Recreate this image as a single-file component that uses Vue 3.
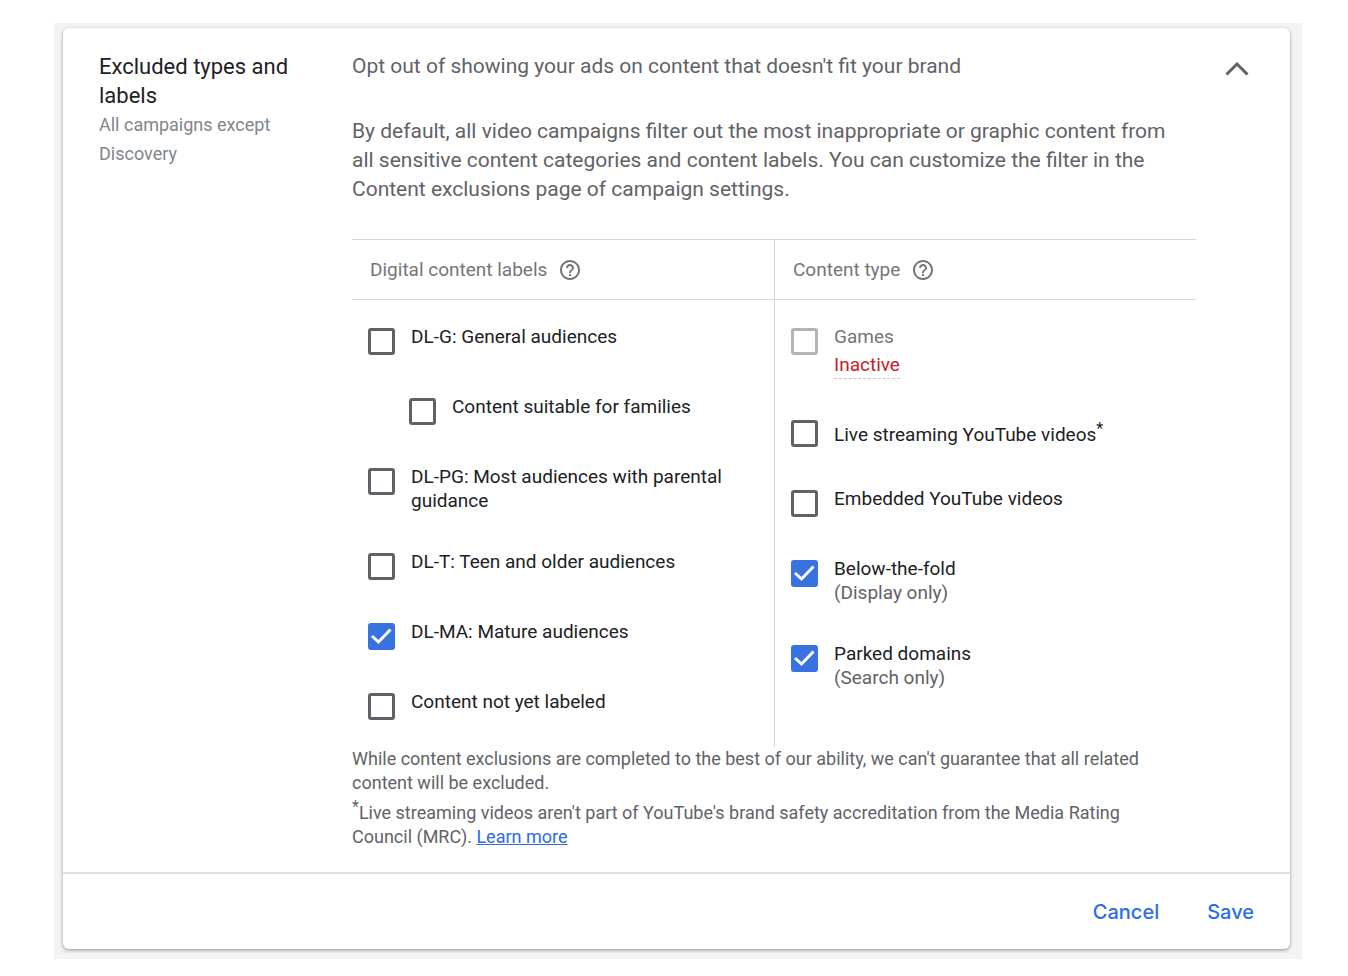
<script setup>
import { ref } from 'vue'

const expanded = ref(true)

const labels = ref([
  { id: 'dl-g', text: 'DL-G: General audiences', checked: false },
  { id: 'families', text: 'Content suitable for families', checked: false, nested: true },
  { id: 'dl-pg', text: 'DL-PG: Most audiences with parental guidance', checked: false },
  { id: 'dl-t', text: 'DL-T: Teen and older audiences', checked: false },
  { id: 'dl-ma', text: 'DL-MA: Mature audiences', checked: true },
  { id: 'unlabeled', text: 'Content not yet labeled', checked: false },
])

const types = ref([
  { id: 'games', text: 'Games', checked: false, disabled: true, status: 'Inactive' },
  { id: 'live', text: 'Live streaming YouTube videos', checked: false, starred: true },
  { id: 'embedded', text: 'Embedded YouTube videos', checked: false },
  { id: 'below', text: 'Below-the-fold', checked: true, hint: '(Display only)' },
  { id: 'parked', text: 'Parked domains', checked: true, hint: '(Search only)' },
])

const columns = [
  { id: 'labels', title: 'Digital content labels', items: labels },
  { id: 'types', title: 'Content type', items: types },
]
</script>

<template>
  <main class="page">
    <section class="card">
      <div class="body">
        <header class="side">
          <h2 class="title">Excluded types and labels</h2>
          <p class="subtitle">All campaigns except Discovery</p>
        </header>

        <div class="content">
          <p class="intro">Opt out of showing your ads on content that doesn't fit your brand</p>
          <p class="intro">
            By default, all video campaigns filter out the most inappropriate or graphic content from
            all sensitive content categories and content labels. You can customize the filter in the
            Content exclusions page of campaign settings.
          </p>

          <div class="columns">
            <section v-for="col in columns" :key="col.id" class="column">
              <div class="column-head">
                <h3 class="column-title">{{ col.title }}</h3>
                <button type="button" class="icon-button" :aria-label="'Help: ' + col.title">
                  <svg width="24" height="24" viewBox="0 0 24 24" fill="currentColor" aria-hidden="true">
                    <path d="M11 18h2v-2h-2v2zm1-16C6.48 2 2 6.48 2 12s4.48 10 10 10 10-4.48 10-10S17.520 2 12 2zm0 18c-4.410 0-8-3.590-8-8s3.590-8 8-8 8 3.590 8 8-3.590 8-8 8zm0-14c-2.210 0-4 1.790-4 4h2c0-1.100.9-2 2-2s2 .9 2 2c0 2-3 1.750-3 5h2c0-2.250 3-2.500 3-5 0-2.210-1.790-4-4-4z" />
                  </svg>
                </button>
              </div>
              <ul class="options">
                <li v-for="item in col.items.value" :key="item.id" class="option" :class="{ nested: item.nested, disabled: item.disabled }">
                  <span class="box">
                    <input :id="item.id" v-model="item.checked" type="checkbox" class="check" :disabled="item.disabled" />
                    <svg v-if="item.checked" class="tick" viewBox="0 0 27 27" fill="none" stroke="currentColor" stroke-width="3" aria-hidden="true">
                      <path d="M4 13 10.500 19 22.500 6.500" />
                    </svg>
                  </span>
                  <div class="option-text">
                    <label :for="item.id" class="option-label">{{ item.text }}<sup v-if="item.starred">*</sup><span v-if="item.hint" class="hint">{{ item.hint }}</span></label>
                    <div v-if="item.status" class="status-row"><span class="status">{{ item.status }}</span></div>
                  </div>
                </li>
              </ul>
            </section>
          </div>

          <p class="note">
            While content exclusions are completed to the best of our ability, we can't guarantee that all related
            content will be excluded.
          </p>
          <p class="note">
            <sup>*</sup>Live streaming videos aren't part of YouTube's brand safety accreditation from the Media Rating
            Council (MRC). <a href="#" class="link">Learn more</a>
          </p>
        </div>

        <button type="button" class="icon-button collapse" aria-label="Collapse" :aria-expanded="expanded" @click="expanded = !expanded">
          <svg width="24" height="16" viewBox="0 0 24 16" fill="none" stroke="currentColor" stroke-width="3" aria-hidden="true">
            <path d="M1.500 13.500 12 3 22.500 13.500" />
          </svg>
        </button>
      </div>

      <footer class="actions">
        <button type="button" class="action">Cancel</button>
        <button type="button" class="action">Save</button>
      </footer>
    </section>
  </main>
</template>

<style>
body {
  margin: 0;
  background: #fff;
}
</style>

<style scoped>
.page {
  margin: 23px 46px 17px 54px;
  padding: 5px 12px 10px 9px;
  background: #f1f3f4;
  font-family: Roboto, "Liberation Sans", sans-serif;
  color: #202124;
}
.card {
  background: #fff;
  border-radius: 6px;
  box-shadow: 0 1px 3px rgba(60, 64, 67, 0.4), 0 2px 4px rgba(60, 64, 67, 0.15);
}
.body {
  display: flex;
  align-items: flex-start;
  padding: 24px 41px 23px 36px;
  border-bottom: 2px solid #e0e0e0;
}
h2,
h3,
p,
ul {
  margin: 0;
  padding: 0;
  font-weight: 400;
}
.side {
  flex: 0 0 200px;
  margin-right: 53px;
}
.title {
  font-size: 22px;
  line-height: 29px;
}
.subtitle {
  font-size: 18px;
  line-height: 29px;
  color: #80868b;
}
.content {
  flex: 1;
  min-width: 0;
}
.intro {
  padding-right: 20px;
  font-size: 21px;
  line-height: 29px;
  color: #5f6368;
}
.intro + .intro {
  margin: 36px 0 35px;
}
.columns {
  display: grid;
  grid-template-columns: 1fr 1fr;
  border-top: 1px solid #d4d6da;
}
.column + .column {
  border-left: 1px solid #d4d6da;
}
.column-head {
  display: flex;
  align-items: center;
  gap: 11px;
  height: 59px;
  padding: 0 18px;
  border-bottom: 1px solid #d4d6da;
  color: #757575;
}
.column-title {
  font-size: 19px;
  line-height: 24px;
}
.icon-button {
  display: block;
  padding: 0;
  border: 0;
  background: none;
  color: inherit;
  cursor: pointer;
}
.icon-button svg {
  display: block;
}
.options {
  display: flex;
  flex-direction: column;
  gap: 37px;
  padding: 25px 16px 24px;
  list-style: none;
}
.option {
  display: flex;
  align-items: flex-start;
  gap: 16px;
  min-height: 33px;
  font-size: 19px;
  line-height: 24px;
}
.nested {
  padding-left: 41px;
}
.box {
  display: grid;
  flex: none;
  width: 27px;
  height: 27px;
  margin-top: 3px;
}
.check {
  grid-area: 1 / 1;
  box-sizing: border-box;
  width: 27px;
  height: 27px;
  margin: 0;
  border: 3px solid #5f6368;
  border-radius: 3px;
  background: #fff;
  appearance: none;
}
.check:checked {
  border-color: #3871e0;
  background: #3871e0;
}
.check:disabled {
  border-color: #b4b4b4;
}
.tick {
  grid-area: 1 / 1;
  width: 27px;
  height: 27px;
  color: #fff;
  pointer-events: none;
}
.disabled .option-label {
  color: #757575;
}
.hint {
  display: block;
  color: #5f6368;
}
sup {
  font-size: 16px;
}
.status-row {
  height: 28px;
  margin-top: 3px;
}
.status {
  display: inline-block;
  line-height: 26px;
  border-bottom: 1px dashed #c4c7cc;
  color: #c5221f;
}
.note {
  padding-right: 20px;
  font-size: 18px;
  line-height: 24px;
  color: #5f6368;
}
.link {
  color: #2b6de8;
  text-decoration: underline;
}
.collapse {
  margin: 9px 0 0 29px;
  color: #5f6368;
}
.actions {
  display: flex;
  justify-content: flex-end;
  align-items: center;
  gap: 48px;
  height: 75px;
  padding: 0 36px;
}
.action {
  padding: 0;
  border: 0;
  background: none;
  font-family: Inter, Roboto, sans-serif;
  font-weight: 500;
  font-size: 20px;
  line-height: 28px;
  color: #2b6de8;
  cursor: pointer;
}
</style>
